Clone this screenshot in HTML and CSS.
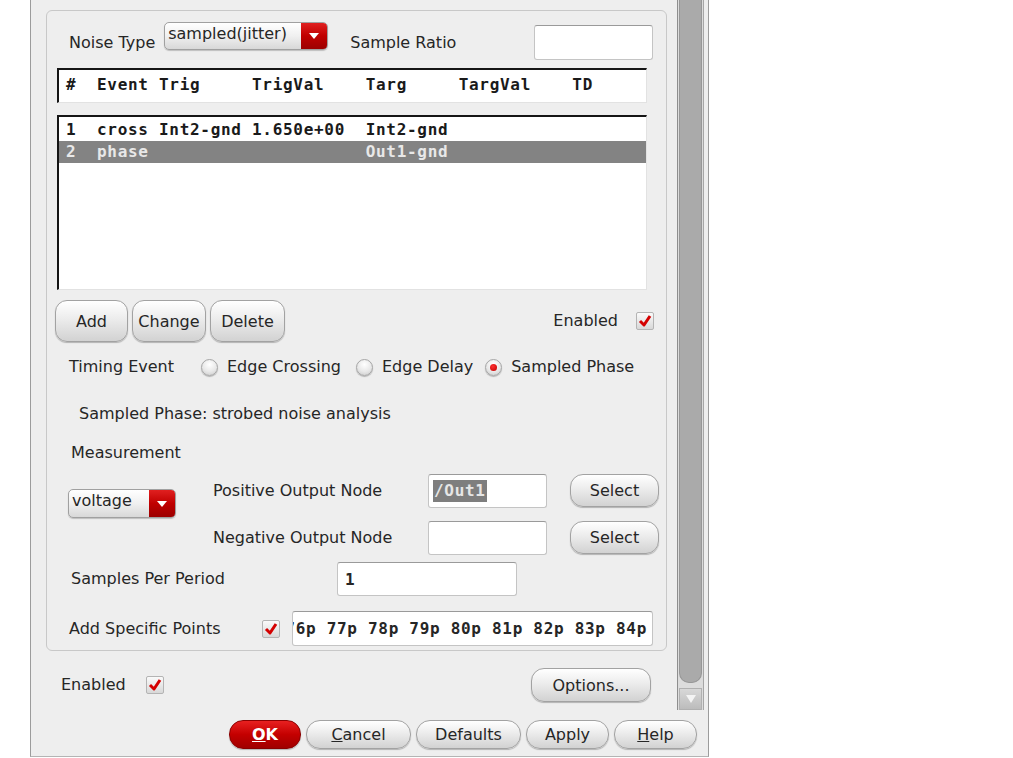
FILE: index.html
```html
<!DOCTYPE html>
<html>
<head>
<meta charset="utf-8">
<link rel="stylesheet" href="styles.css">
</head>
<body>
<div class="dialog">
  <div class="main">
    <div class="content">
      <div class="group">
        <div class="row-noise">
          <span class="lbl">Noise Type</span>
          <div class="combo combo-noise">
            <span class="combo-text">sampled(jitter)</span>
            <span class="combo-btn"><svg width="12" height="8" viewBox="0 0 12 8"><path d="M1 1 L11 1 L6 7 Z" fill="#fff"/></svg></span>
          </div>
          <span class="lbl lbl-ratio">Sample Ratio</span>
          <div class="field field-ratio"></div>
        </div>
        <div class="table-head mono">#  Event Trig     TrigVal    Targ     TargVal    TD</div>
        <div class="table-list">
          <div class="trow mono">1  cross Int2-gnd 1.650e+00  Int2-gnd</div>
          <div class="trow mono sel">2  phase                     Out1-gnd</div>
        </div>
        <div class="row-btns">
          <div class="btn btn-add">Add</div>
          <div class="btn btn-change">Change</div>
          <div class="btn btn-delete">Delete</div>
          <span class="lbl lbl-enabled">Enabled</span>
          <span class="check"><svg width="16" height="16" viewBox="0 0 16 16"><path d="M3 8 L7 12 L13 3" fill="none" stroke="#d40000" stroke-width="3" stroke-linejoin="round"/></svg></span>
        </div>
        <div class="row-timing">
          <span class="lbl lbl-timing">Timing Event</span>
          <span class="radio"></span><span class="lbl opt">Edge Crossing</span>
          <span class="radio r2"></span><span class="lbl opt">Edge Delay</span>
          <span class="radio r3 on"></span><span class="lbl opt">Sampled Phase</span>
        </div>
        <div class="row-info"><span class="lbl">Sampled Phase: strobed noise analysis</span></div>
        <div class="row-meas"><span class="lbl">Measurement</span></div>
        <div class="row-nodes">
          <div class="combo combo-volt">
            <span class="combo-text">voltage</span>
            <span class="combo-btn"><svg width="12" height="8" viewBox="0 0 12 8"><path d="M1 1 L11 1 L6 7 Z" fill="#fff"/></svg></span>
          </div>
          <div class="node-col">
            <div class="node-row">
              <span class="lbl node-lbl">Positive Output Node</span>
              <div class="field field-node"><span class="mono hl">/Out1</span></div>
              <div class="btn btn-select">Select</div>
            </div>
            <div class="node-row node-row2">
              <span class="lbl node-lbl">Negative Output Node</span>
              <div class="field field-node"></div>
              <div class="btn btn-select">Select</div>
            </div>
          </div>
        </div>
        <div class="row-samples">
          <span class="lbl samples-lbl">Samples Per Period</span>
          <div class="field field-samples"><span class="mono">1</span></div>
        </div>
        <div class="row-points">
          <span class="lbl points-lbl">Add Specific Points</span>
          <span class="check"><svg width="16" height="16" viewBox="0 0 16 16"><path d="M3 8 L7 12 L13 3" fill="none" stroke="#d40000" stroke-width="3" stroke-linejoin="round"/></svg></span>
          <div class="field field-points"><span class="mono pts">76p 77p 78p 79p 80p 81p 82p 83p 84p</span></div>
        </div>
      </div>
      <div class="row-enabled">
        <span class="lbl enabled2">Enabled</span>
        <span class="check"><svg width="16" height="16" viewBox="0 0 16 16"><path d="M3 8 L7 12 L13 3" fill="none" stroke="#d40000" stroke-width="3" stroke-linejoin="round"/></svg></span>
        <div class="btn btn-options">Options...</div>
      </div>
    </div>
    <div class="scroll">
      <div class="thumb"></div>
      <div class="arrow"><svg width="12" height="10" viewBox="0 0 12 10"><path d="M1 1 L11 1 L6 9 Z" fill="#f4f4f4"/></svg></div>
    </div>
  </div>
  <div class="row-bottom">
    <div class="btn btn-ok"><u>O</u>K</div>
    <div class="btn btn-cancel"><u>C</u>ancel</div>
    <div class="btn btn-defaults">Defaults</div>
    <div class="btn btn-apply">Apply</div>
    <div class="btn btn-help"><u>H</u>elp</div>
  </div>
</div>
</body>
</html>
```

FILE: styles.css
```css
* { box-sizing: border-box; }
html, body { margin: 0; padding: 0; background: #ffffff; }
body {
  font-family: "DejaVu Sans", "Noto Sans", sans-serif;
  font-size: 16px;
  color: #262626;
}
.mono {
  font-family: "DejaVu Sans Mono", "Liberation Mono", monospace;
  font-weight: bold;
  font-size: 16px;
  letter-spacing: 0.7px;
  white-space: pre;
}
.lbl { white-space: nowrap; line-height: 20px; }

.dialog {
  margin-left: 30px;
  width: 679px;
  height: 757px;
  background: #eeeeee;
  border-left: 1px solid #9c9c9c;
  border-right: 1px solid #9c9c9c;
  border-bottom: 1px solid #b4b4b4;
  display: flex;
  flex-direction: column;
}
.main { display: flex; height: 712px; }
.content {
  width: 646px;
  padding-left: 15px;
  display: flex;
  flex-direction: column;
}
.group {
  margin-top: 10px;
  width: 621px;
  border: 1px solid #c8c8c8;
  border-radius: 6px;
  padding-bottom: 4px;
  display: flex;
  flex-direction: column;
}

/* controls */
.field {
  background: #ffffff;
  border: 1px solid #c4c4c4;
  border-top-color: #9a9a9a;
  border-radius: 3px;
  display: flex;
  align-items: center;
  overflow: hidden;
}
.btn {
  display: flex;
  align-items: center;
  justify-content: center;
  border: 1px solid #a2a2a2;
  border-radius: 12px;
  background: linear-gradient(#ffffff, #ececec 45%, #d2d2d2);
  box-shadow: 0 1px 1px rgba(0,0,0,0.25);
  color: #262626;
  white-space: nowrap;
}
.combo {
  display: flex;
  border: 1px solid #a0a0a0;
  border-radius: 5px;
  background: linear-gradient(#ffffff, #f0f0f0 50%, #d8d8d8);
  box-shadow: 0 1px 1px rgba(0,0,0,0.2);
  overflow: hidden;
}
.combo-text { flex: 1; padding-left: 3px; line-height: 22px; white-space: nowrap; }
.combo-btn {
  width: 26px;
  background: linear-gradient(#e02020, #c00000 50%, #9c0000);
  display: flex;
  align-items: center;
  justify-content: center;
}
.check {
  width: 18px;
  height: 18px;
  border: 1px solid #b4b4b4;
  border-radius: 2px;
  background: linear-gradient(#fafafa, #d8d8d8);
  display: flex;
  align-items: center;
  justify-content: center;
  flex: none;
}
.radio {
  width: 17px;
  height: 17px;
  border-radius: 50%;
  border: 1px solid #a6a6a6;
  background: radial-gradient(circle at 50% 30%, #ffffff, #e8e8e8 55%, #c8c8c8);
  box-shadow: 0 1px 1px rgba(0,0,0,0.25);
  flex: none;
  display: flex;
  align-items: center;
  justify-content: center;
}
.radio.on::after {
  content: "";
  width: 7px;
  height: 7px;
  border-radius: 50%;
  background: radial-gradient(circle at 40% 35%, #ff3030, #c00000);
}

/* row: noise type */
.row-noise {
  margin-top: 14px;
  height: 35px;
  display: flex;
  align-items: center;
  padding-left: 22px;
  padding-right: 13px;
}
.combo-noise {
  width: 164px;
  height: 28px;
  margin-left: 9px;
  align-self: flex-start;
  margin-top: -3px;
}
.lbl-ratio { margin-left: 22px; }
.field-ratio { margin-left: auto; width: 119px; height: 35px; }

/* table */
.table-head, .table-list {
  margin-left: 10px;
  margin-right: 19px;
  background: #ffffff;
  border-top: 2px solid #151515;
  border-left: 2px solid #151515;
  border-right: 1px solid #e2e2e2;
  border-bottom: 1px solid #e2e2e2;
}
.table-head {
  margin-top: 8px;
  height: 35px;
  padding: 5px 0 0 7px;
  line-height: 20px;
  color: #1a1a1a;
}
.table-list {
  margin-top: 12px;
  height: 175px;
  padding-top: 2px;
  color: #1a1a1a;
}
.trow { height: 22px; line-height: 22px; padding-left: 7px; }
.trow.sel { background: #838383; color: #e8e8e8; }

/* add/change/delete */
.row-btns {
  margin-top: 10px;
  height: 42px;
  display: flex;
  align-items: center;
  padding-left: 8px;
  padding-right: 12px;
  gap: 4px;
}
.row-btns .btn { height: 42px; }
.btn-add { width: 73px; }
.btn-change { width: 74px; }
.btn-delete { width: 75px; }
.lbl-enabled { margin-left: auto; margin-right: 14px; }

/* timing */
.row-timing {
  margin-top: 15px;
  height: 20px;
  display: flex;
  align-items: center;
  padding-left: 22px;
}
.lbl-timing { width: 132px; }
.opt { margin-left: 9px; }
.r2 { margin-left: 15px; }
.r3 { margin-left: 12px; }

.row-info { margin-top: 27px; height: 20px; padding-left: 32px; }
.row-meas { margin-top: 19px; height: 20px; padding-left: 24px; }

/* nodes */
.row-nodes { margin-top: 10px; display: flex; padding-left: 21px; }
.combo-volt { width: 108px; height: 29px; margin-top: 16px; }
.node-col { margin-left: 37px; display: flex; flex-direction: column; }
.node-row { display: flex; align-items: center; height: 35px; }
.node-row2 { margin-top: 12px; }
.node-lbl { width: 215px; }
.field-node { width: 119px; height: 34px; padding-left: 4px; }
.hl { background: #7e7e7e; color: #e6e6e6; line-height: 22px; padding: 0 1px; }
.btn-select { width: 89px; height: 33px; margin-left: 23px; border-radius: 13px; }

/* samples */
.row-samples {
  margin-top: 7px;
  height: 34px;
  display: flex;
  align-items: center;
  padding-left: 24px;
}
.samples-lbl { width: 266px; }
.field-samples { width: 180px; height: 34px; padding-left: 7px; }

.row-points {
  margin-top: 15px;
  height: 35px;
  display: flex;
  align-items: center;
  padding-left: 22px;
}
.points-lbl { width: 193px; }
.field-points {
  width: 361px;
  height: 35px;
  margin-left: 12px;
  justify-content: flex-end;
  padding-right: 5px;
}
.pts { flex: none; }

/* enabled + options */
.row-enabled {
  margin-top: 17px;
  width: 621px;
  height: 34px;
  display: flex;
  align-items: center;
  padding-left: 15px;
  padding-right: 16px;
}
.enabled2 { width: 85px; }
.btn-options { margin-left: auto; width: 120px; height: 34px; border-radius: 13px; }

/* scrollbar */
.scroll {
  width: 27px;
  height: 710px;
  border-left: 1px solid #8e8e8e;
  border-right: 1px solid #a6a6a6;
  background: #dcdcdc;
  padding: 0 1px;
  display: flex;
  flex-direction: column;
}
.thumb {
  height: 683px;
  background: #aaaaaa;
  border: 1px solid #979797;
  border-top: none;
  border-radius: 0 0 10px 10px;
}
.arrow {
  margin-top: 5px;
  height: 22px;
  background: linear-gradient(#d8d8d8, #bcbcbc);
  border: 1px solid #b0b0b0;
  display: flex;
  align-items: center;
  justify-content: center;
}

/* bottom */
.row-bottom {
  margin-top: 8px;
  height: 29px;
  display: flex;
  gap: 5px;
  padding-left: 198px;
}
.row-bottom .btn { height: 29px; border-radius: 14px; }
.btn-ok {
  width: 72px;
  background: linear-gradient(#e82020, #c40000 50%, #a00000);
  border-color: #8a0000;
  color: #ffffff;
  font-weight: bold;
}
.btn-cancel { width: 105px; }
.btn-defaults { width: 105px; }
.btn-apply { width: 83px; }
.btn-help { width: 83px; }
```
